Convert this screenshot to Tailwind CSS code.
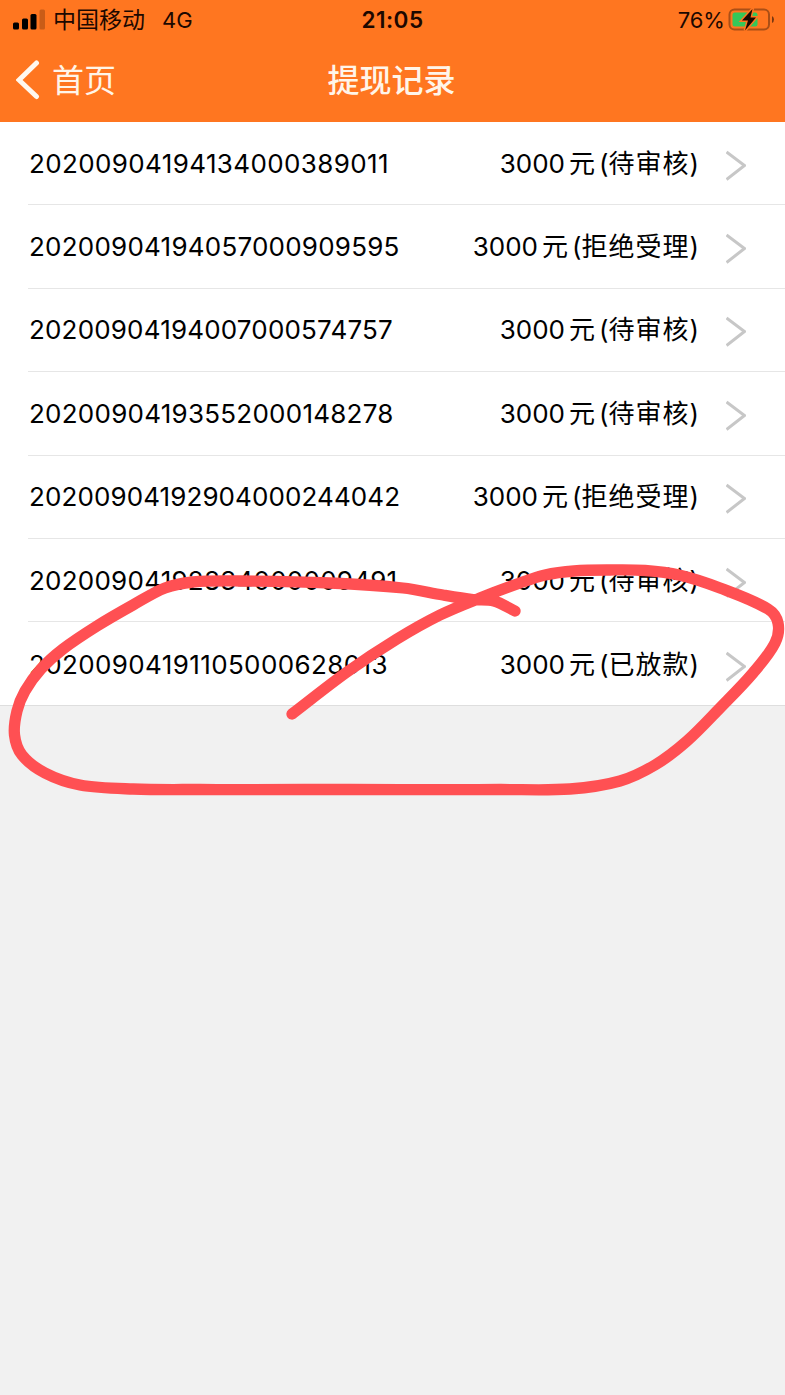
<!DOCTYPE html>
<html lang="zh-CN">
<head>
<meta charset="utf-8">
<title>提现记录</title>
<script src="https://cdn.jsdelivr.net/npm/@tailwindcss/browser@4"></script>
</head>
<body class="relative h-[1395px] w-[785px] overflow-hidden bg-[#f1f1f1] font-['Inter','Noto_Sans_CJK_SC',sans-serif] text-black">
<header class="h-[122px] bg-[#ff7620]">
  <div class="grid h-10 grid-cols-3 items-center text-[#1c0800]">
    <div class="flex items-center pl-[13px] text-[22px] leading-10">
      <svg class="h-[22px] w-8 shrink-0" viewBox="0 0 32 22"><rect x="0" y="13.500" width="6" height="7" rx="1.5"/><rect x="9" y="9.500" width="6" height="11" rx="1.5"/><rect x="17.500" y="5" width="6" height="15.500" rx="1.5"/><rect x="26.500" y=".5" width="5.500" height="20" rx="1.5" fill="#c95c17"/></svg>
      <span class="ml-2 text-[23px]">中国移动</span><span class="ml-[17px]">4G</span>
    </div>
    <div class="text-center text-[22.5px] font-semibold leading-10 tracking-[0.5px]">21:05</div>
    <div class="flex items-center justify-end pr-[10px] text-[22px] leading-10">
      <span>76%</span>
      <svg class="ml-[3px] h-6 w-[47px] shrink-0" viewBox="0 0 47 24"><rect x="1.500" y="1.500" width="39.500" height="20" rx="5" fill="none" stroke="#aa4f16" stroke-width="2"/><rect x="4.500" y="4.500" width="25" height="14" rx="2.5" fill="#35c759"/><path d="M44 8q2 1 2 3.500t-2 3.500z" fill="#7a3810"/><path d="M24.500 1 14 12.500H20L17 22.500 28 9.500H22.500z" fill="#1c0800" stroke="#ff7620" stroke-width="3" paint-order="stroke"/></svg>
    </div>
  </div>
  <div class="grid h-20 grid-cols-3 items-center text-[32px] text-[#fff5e9]">
    <div class="flex items-center pl-4"><svg class="h-10 w-6" viewBox="0 0 24 40" fill="none" stroke="#fff8ef" stroke-width="5" stroke-linecap="round"><path d="M20.500 3 3 20 20.500 36.500"/></svg><span class="ml-3 pt-px">首页</span></div>
    <h1 class="pr-0.5 pt-px text-center font-medium">提现记录</h1>
  </div>
</header>
<main id="list" class="h-[584px] border-b border-[#dedede] bg-white pl-7 text-[26px]"></main>
<svg class="pointer-events-none absolute left-0 top-0 h-[1395px] w-[785px]" viewBox="0 0 785 1395" fill="none" stroke="#ff5053" stroke-width="11.300" stroke-linecap="round" stroke-linejoin="round"><path id="loop"/></svg>
<script>
// id, state, letter spacing of the id in px
const records = [
  ['20200904194134000389011','待审核',0.38],['20200904194057000909595','拒绝受理',0.23],
  ['20200904194007000574757','待审核',0.18],['20200904193552000148278','待审核',0.25],
  ['20200904192904000244042','拒绝受理',0.1],['20200904192834000009491','待审核',0.24],
  ['20200904191105000628013','已放款',0.38]
];
document.getElementById('list').innerHTML = records.map(([id,state,spacing],i) => `
<div class="flex h-[83.4px] items-center ${i < 6 ? 'border-b border-[#e6e6e6]' : ''}">
  <span class="ml-px whitespace-nowrap" style="letter-spacing:${spacing}px">${id}</span>
  <span class="ml-auto flex items-baseline whitespace-nowrap"><span>3000</span><span class="ml-1 mr-1">元</span><span>(</span><span class="tracking-[1px]">${state}</span><span>)</span></span>
  <svg class="ml-[27px] mr-[39px] mt-1 h-[31px] w-5 shrink-0" viewBox="0 0 20 31" fill="none" stroke="#c7c7c7" stroke-width="3"><path d="M.5 2 18.500 15.500.5 29.500"/></svg>
</div>`).join('');

// Hand-drawn loop: a smooth curve through the stroke's points
const pts = [[292,714],[347,672],[397,639],[440,615],[480,598],[520,583],[545,575],[574,571],[610,570],[645,570.5],[679,575],[720,588],[768,609],[778,623],[775,643],[753,673],[720,708],[687,741],[655,765],[620,781],[570,789],[500,789.5],[350,789.5],[200,789.5],[133,789],[80,785],[45,773],[22,755],[14.5,735],[17,711],[25,691],[41,669],[63,649],[97,626],[133,605],[165,588],[193,582],[240,581],[330,583],[403,588],[443,595],[473,599.5],[494,601],[515,611]];
let d = `M${pts[0]}`;
for (let i = 0; i < pts.length - 1; i++) {
  const a = pts[Math.max(i - 1, 0)], b = pts[i], c = pts[i + 1], e = pts[Math.min(i + 2, pts.length - 1)];
  const len = Math.hypot(c[0] - b[0], c[1] - b[1]) / 3;
  const n1 = Math.hypot(c[0] - a[0], c[1] - a[1]), n2 = Math.hypot(e[0] - b[0], e[1] - b[1]);
  d += `C${b[0] + (c[0] - a[0]) / n1 * len},${b[1] + (c[1] - a[1]) / n1 * len} ${c[0] - (e[0] - b[0]) / n2 * len},${c[1] - (e[1] - b[1]) / n2 * len} ${c}`;
}
document.getElementById('loop').setAttribute('d', d);
</script>
</body>
</html>
